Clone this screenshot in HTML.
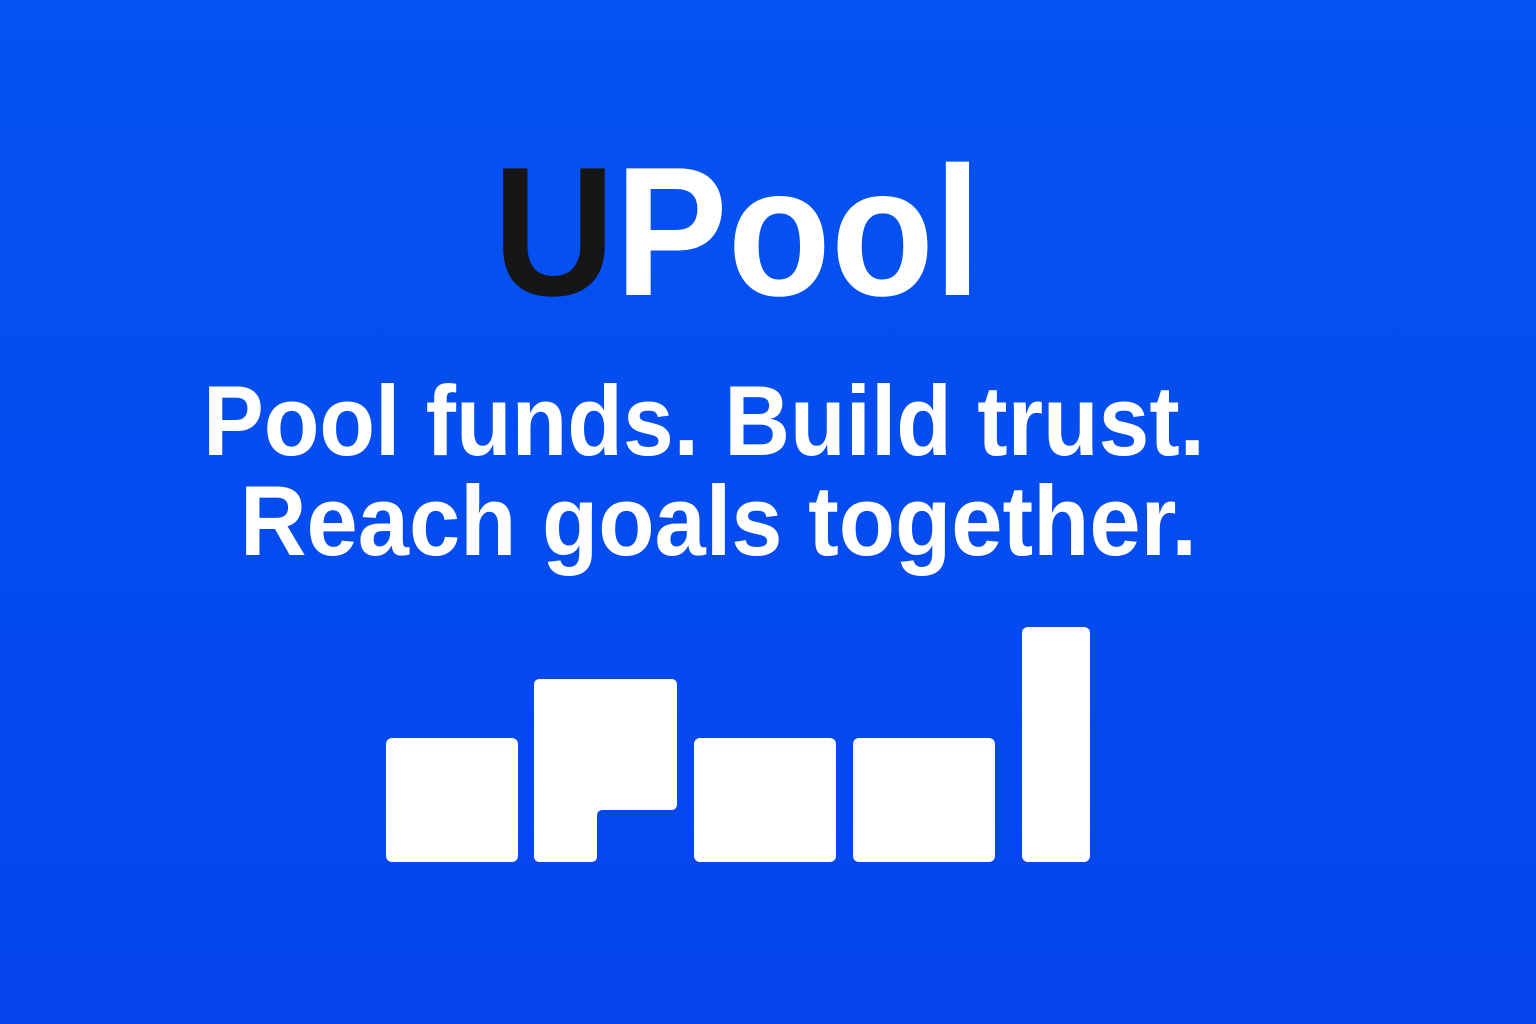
<!DOCTYPE html>
<html><head><meta charset="utf-8"><style>
html,body{margin:0;padding:0}
body{width:1536px;height:1024px;overflow:hidden;background:linear-gradient(180deg,#0553f2 0%,#044bef 60%,#0444ee 100%)}
svg{position:absolute;left:0;top:0}
text{font-family:"Liberation Sans",sans-serif;font-weight:bold}
</style></head><body>
<svg width="1536" height="1024" viewBox="0 0 1536 1024">
<text x="493" y="295" font-size="184" textLength="488" lengthAdjust="spacingAndGlyphs" fill="#fff"><tspan fill="#161616">U</tspan>Pool</text>
<text x="203" y="455" font-size="99" textLength="1002" lengthAdjust="spacingAndGlyphs" fill="#fff">Pool funds. Build trust.</text>
<text x="240" y="555" font-size="99" textLength="957" lengthAdjust="spacingAndGlyphs" fill="#fff">Reach goals together.</text>
<g fill="#fff">
<rect x="386" y="738" width="132" height="124" rx="6"/>
<path d="M540 679 H671 Q677 679 677 685 V804 Q677 810 671 810 H603 Q597 810 597 816 V856 Q597 862 591 862 H540 Q534 862 534 856 V685 Q534 679 540 679 Z"/>
<rect x="694" y="738" width="142" height="124" rx="6"/>
<rect x="853" y="738" width="142" height="124" rx="6"/>
<rect x="1022" y="627" width="68" height="235" rx="6"/>
</g>
</svg>
</body></html>
